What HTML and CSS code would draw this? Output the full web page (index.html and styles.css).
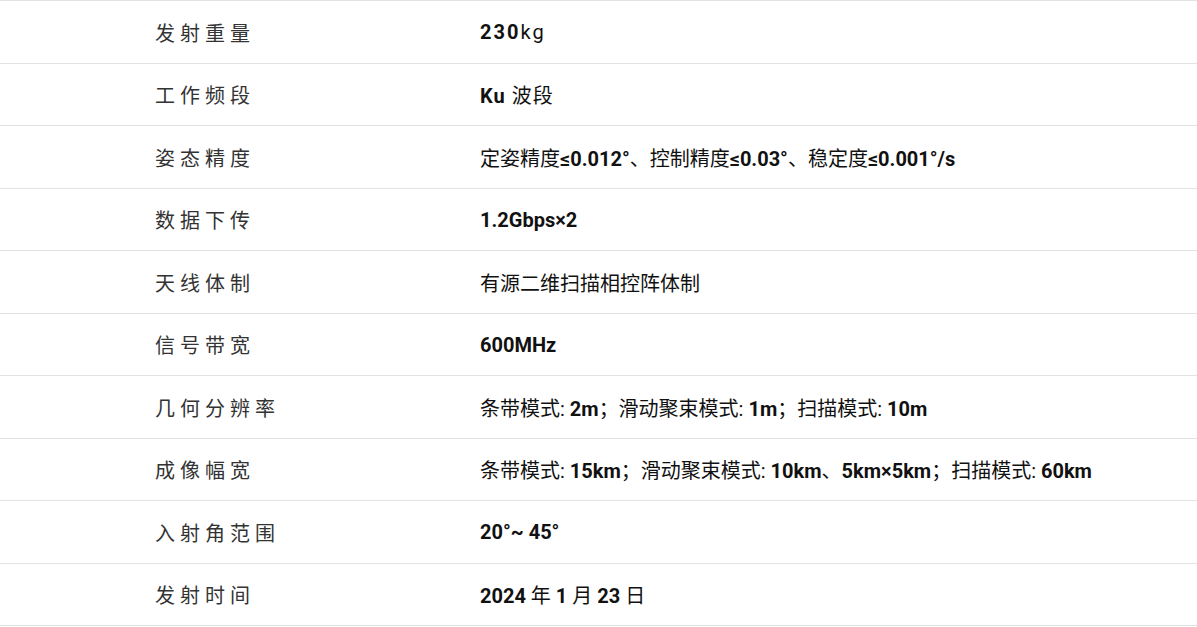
FILE: index.html
```html
<!DOCTYPE html>
<html lang="zh-CN">
<head>
<meta charset="utf-8">
<title>参数</title>
<link rel="stylesheet" href="styles.css">
</head>
<body>
<div class="spec">
  <div class="row"><div class="label">发射重量</div><div class="value spaced"><b>230</b>kg</div></div>
  <div class="row"><div class="label">工作频段</div><div class="value spaced-sm"><b>Ku</b> 波段</div></div>
  <div class="row"><div class="label">姿态精度</div><div class="value">定姿精度<b>≤0.012°</b>、控制精度<b>≤0.03°</b>、稳定度<b>≤0.001°/s</b></div></div>
  <div class="row"><div class="label">数据下传</div><div class="value"><b>1.2Gbps×2</b></div></div>
  <div class="row"><div class="label">天线体制</div><div class="value">有源二维扫描相控阵体制</div></div>
  <div class="row"><div class="label">信号带宽</div><div class="value"><b>600MHz</b></div></div>
  <div class="row"><div class="label">几何分辨率</div><div class="value">条带模式: <b>2m</b>；滑动聚束模式: <b>1m</b>；扫描模式: <b>10m</b></div></div>
  <div class="row"><div class="label">成像幅宽</div><div class="value">条带模式: <b>15km</b>；滑动聚束模式: <b>10km</b>、<b>5km×5km</b>；扫描模式: <b>60km</b></div></div>
  <div class="row"><div class="label">入射角范围</div><div class="value"><b>20°~ 45°</b></div></div>
  <div class="row"><div class="label">发射时间</div><div class="value"><b>2024</b> 年 <b>1</b> 月 <b>23</b> 日</div></div>
</div>
</body>
</html>
```
FILE: styles.css
```css
html, body {
  margin: 0;
  padding: 0;
  background: #fff;
}
body {
  font-family: Roboto, "Noto Sans CJK SC", sans-serif;
  color: #111;
}
.spec {
  display: flex;
  flex-direction: column;
  border-top: 1px solid #e2e2e2;
}
.row {
  display: grid;
  grid-template-columns: 480px 1fr;
  align-items: center;
  height: 62.5px;
  box-sizing: border-box;
  border-bottom: 1px solid #e2e2e2;
  padding-top: 1px;
}
.label {
  padding-left: 155px;
  font-size: 20px;
  letter-spacing: 5px;
  color: #333;
}
.value {
  font-size: 20px;
  color: #111;
}
.value.spaced {
  letter-spacing: 2px;
}
.value.spaced-sm {
  letter-spacing: 1px;
}
.value b {
  font-weight: 700;
}
```
